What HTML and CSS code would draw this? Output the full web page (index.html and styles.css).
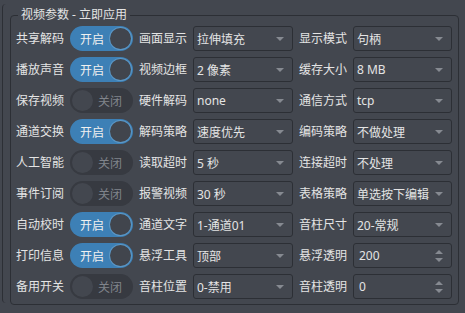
FILE: index.html
```html
<!DOCTYPE html>
<html lang="zh-CN">
<head>
  <meta charset="UTF-8">
  <title>视频参数</title>
  <link rel="stylesheet" href="styles.css">
</head>
<body>
  <div class="frame">
    <fieldset class="group">
      <legend>视频参数 - 立即应用</legend>
      <div class="grid">
        <!-- 第1行 -->
        <span class="label">共享解码</span>
        <div class="switch on"><span class="txt">开启</span><span class="knob"></span></div>
        <span class="label">画面显示</span>
        <div class="combo"><span>拉伸填充</span><i class="arrow"></i></div>
        <span class="label">显示模式</span>
        <div class="combo"><span>句柄</span><i class="arrow"></i></div>

        <!-- 第2行 -->
        <span class="label">播放声音</span>
        <div class="switch on"><span class="txt">开启</span><span class="knob"></span></div>
        <span class="label">视频边框</span>
        <div class="combo"><span>2 像素</span><i class="arrow"></i></div>
        <span class="label">缓存大小</span>
        <div class="combo"><span>8 MB</span><i class="arrow"></i></div>

        <!-- 第3行 -->
        <span class="label">保存视频</span>
        <div class="switch off"><span class="knob"></span><span class="txt">关闭</span></div>
        <span class="label">硬件解码</span>
        <div class="combo"><span>none</span><i class="arrow"></i></div>
        <span class="label">通信方式</span>
        <div class="combo"><span>tcp</span><i class="arrow"></i></div>

        <!-- 第4行 -->
        <span class="label">通道交换</span>
        <div class="switch on"><span class="txt">开启</span><span class="knob"></span></div>
        <span class="label">解码策略</span>
        <div class="combo"><span>速度优先</span><i class="arrow"></i></div>
        <span class="label">编码策略</span>
        <div class="combo"><span>不做处理</span><i class="arrow"></i></div>

        <!-- 第5行 -->
        <span class="label">人工智能</span>
        <div class="switch off"><span class="knob"></span><span class="txt">关闭</span></div>
        <span class="label">读取超时</span>
        <div class="combo"><span>5 秒</span><i class="arrow"></i></div>
        <span class="label">连接超时</span>
        <div class="combo"><span>不处理</span><i class="arrow"></i></div>

        <!-- 第6行 -->
        <span class="label">事件订阅</span>
        <div class="switch off"><span class="knob"></span><span class="txt">关闭</span></div>
        <span class="label">报警视频</span>
        <div class="combo"><span>30 秒</span><i class="arrow"></i></div>
        <span class="label">表格策略</span>
        <div class="combo"><span>单选按下编辑</span><i class="arrow"></i></div>

        <!-- 第7行 -->
        <span class="label">自动校时</span>
        <div class="switch on"><span class="txt">开启</span><span class="knob"></span></div>
        <span class="label">通道文字</span>
        <div class="combo"><span>1-通道01</span><i class="arrow"></i></div>
        <span class="label">音柱尺寸</span>
        <div class="combo"><span>20-常规</span><i class="arrow"></i></div>

        <!-- 第8行 -->
        <span class="label">打印信息</span>
        <div class="switch on"><span class="txt">开启</span><span class="knob"></span></div>
        <span class="label">悬浮工具</span>
        <div class="combo"><span>顶部</span><i class="arrow"></i></div>
        <span class="label">悬浮透明</span>
        <div class="combo spin"><span>200</span><i class="updown"><b class="up"></b><b class="down"></b></i></div>

        <!-- 第9行 -->
        <span class="label">备用开关</span>
        <div class="switch off"><span class="knob"></span><span class="txt">关闭</span></div>
        <span class="label">音柱位置</span>
        <div class="combo"><span>0-禁用</span><i class="arrow"></i></div>
        <span class="label">音柱透明</span>
        <div class="combo spin"><span>0</span><i class="updown"><b class="up"></b><b class="down"></b></i></div>
      </div>
    </fieldset>
  </div>
</body>
</html>
```

FILE: styles.css
```css
/* 深色主题 */
body {
  margin: 0;
  width: 465px;
  height: 313px;
  overflow: hidden;
  background-color: #43474f;
  color: #e4e4e4;
  font-family: "Noto Sans", "Noto Sans CJK SC", sans-serif;
  font-size: 12px;
}
.frame {
  margin: 4px 0 0 2px;
  padding: 3px 0 0 7px;
  height: 296px;
  border-left: 1px solid #2c2f35;
  border-radius: 4px 0 0 4px;
}
.group {
  box-sizing: border-box;
  width: 449px;
  margin: 0;
  min-width: 0;
  padding: 3px 5px 5px 5px;
  border: 1px solid #2c2f35;
  border-radius: 4px;
}
.group legend {
  margin-left: 2px;
  padding: 0 3px;
  line-height: 16px;
}
.grid {
  display: grid;
  grid-template-columns: 48px 63px 48px 100px 48px 99px;
  grid-auto-rows: 25px;
  column-gap: 6px;
  row-gap: 6px;
}
.label {
  line-height: 25px;
  white-space: nowrap;
}

/* 开关 */
.switch {
  display: flex;
  align-items: center;
  box-sizing: border-box;
  height: 25px;
  padding: 0 2px;
  border-radius: 13px;
}
.switch .knob {
  width: 21px;
  height: 21px;
  border-radius: 50%;
  flex: none;
}
.switch .txt {
  flex: 1;
  text-align: center;
}
.switch.on {
  background-color: #3d80b6;
}
.switch.on .txt {
  color: #f0f0f0;
  padding-left: 2px;
}
.switch.on .knob {
  background-color: #41454d;
  box-shadow: 0 0 0 1px #5b97c6;
}
.switch.off {
  background-color: #373a41;
}
.switch.off .txt {
  color: #80848b;
  padding-right: 4px;
}
.switch.off .knob {
  background-color: #43474f;
}

/* 下拉框 */
.combo {
  display: flex;
  align-items: center;
  justify-content: space-between;
  box-sizing: border-box;
  height: 25px;
  padding: 0 8px 0 3px;
  border: 1px solid #2c2f35;
  border-radius: 3px;
  white-space: nowrap;
}
.combo .arrow {
  width: 0;
  height: 0;
  border-left: 4px solid transparent;
  border-right: 4px solid transparent;
  border-top: 4px solid #868a91;
}
.combo.spin {
  padding-left: 5px;
}
.updown {
  display: flex;
  flex-direction: column;
  gap: 4px;
}
.updown b {
  width: 0;
  height: 0;
  border-left: 4px solid transparent;
  border-right: 4px solid transparent;
}
.updown .up {
  border-bottom: 4px solid #868a91;
}
.updown .down {
  border-top: 4px solid #868a91;
}
```
